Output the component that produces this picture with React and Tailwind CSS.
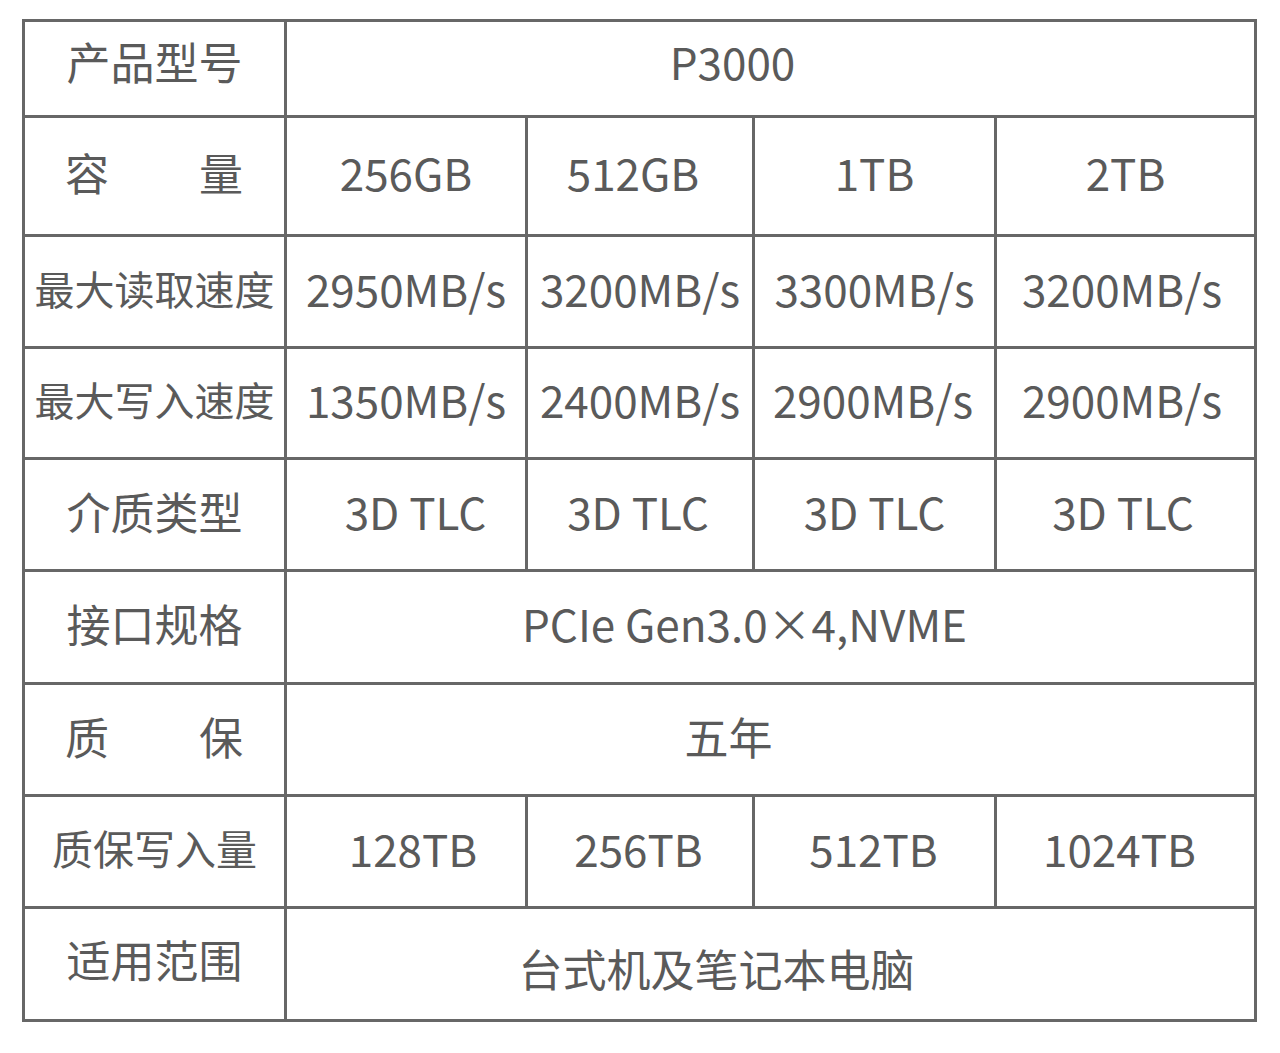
import React from "react";

const font = { fontFamily: '"Noto Sans CJK SC", "Noto Sans", sans-serif' };

function Cell({ children, className = "pb-[8px]", size = "text-[44px]", span = "" }) {
  return (
    <div className={`bg-white flex items-center justify-center text-[#5a5a5a] leading-none whitespace-nowrap ${size} ${span} ${className}`}>
      {children}
    </div>
  );
}

function Spread({ a, b }) {
  return (
    <div className="bg-white flex items-center justify-between pl-[40px] pr-[41px] pb-[8px] text-[44px] text-[#5a5a5a] leading-none">
      <span>{a}</span>
      <span>{b}</span>
    </div>
  );
}

export default function App() {
  return (
    <div className="w-[1280px] h-[1053px] bg-white" style={font}>
      <div className="pt-[19px] pl-[22px]">
        <div className="w-fit bg-[#676767] p-[3px] grid gap-[3px] grid-cols-[259px_238px_224px_239px_257px] grid-rows-[93px_116px_109px_108px_109px_110px_109px_109px_110px]">
          <Cell className="pb-[16px]">产品型号</Cell>
          <Cell span="col-span-4" className="pb-[16px] pr-[76px]">P3000</Cell>

          <Spread a="容" b="量" />
          <Cell>256GB</Cell>
          <Cell className="pb-[8px] pr-[14px]">512GB</Cell>
          <Cell>1TB</Cell>
          <Cell>2TB</Cell>

          <Cell size="text-[40px]">最大读取速度</Cell>
          <Cell>2950MB/s</Cell>
          <Cell>3200MB/s</Cell>
          <Cell>3300MB/s</Cell>
          <Cell className="pb-[8px] pr-[7px]">3200MB/s</Cell>

          <Cell size="text-[40px]">最大写入速度</Cell>
          <Cell>1350MB/s</Cell>
          <Cell>2400MB/s</Cell>
          <Cell className="pb-[8px] pr-[3px]">2900MB/s</Cell>
          <Cell className="pb-[8px] pr-[7px]">2900MB/s</Cell>

          <Cell>介质类型</Cell>
          <Cell className="pb-[8px] pl-[19px]">3D TLC</Cell>
          <Cell className="pb-[8px] pr-[4px]">3D TLC</Cell>
          <Cell>3D TLC</Cell>
          <Cell className="pb-[8px] pr-[5px]">3D TLC</Cell>

          <Cell>接口规格</Cell>
          <Cell span="col-span-4" className="pb-[8px] pr-[52px]">PCIe Gen3.0×4,NVME</Cell>

          <Spread a="质" b="保" />
          <Cell span="col-span-4" className="pb-[8px] pr-[84px]">五年</Cell>

          <Cell size="text-[41px]">质保写入量</Cell>
          <Cell className="pb-[8px] pl-[14px]">128TB</Cell>
          <Cell className="pb-[8px] pr-[3px]">256TB</Cell>
          <Cell className="pb-[8px] pr-[2px]">512TB</Cell>
          <Cell className="pb-[8px] pr-[12px]">1024TB</Cell>

          <Cell className="pb-[10px]">适用范围</Cell>
          <Cell span="col-span-4" className="pt-[8px] pr-[108px]">台式机及笔记本电脑</Cell>
        </div>
      </div>
    </div>
  );
}
